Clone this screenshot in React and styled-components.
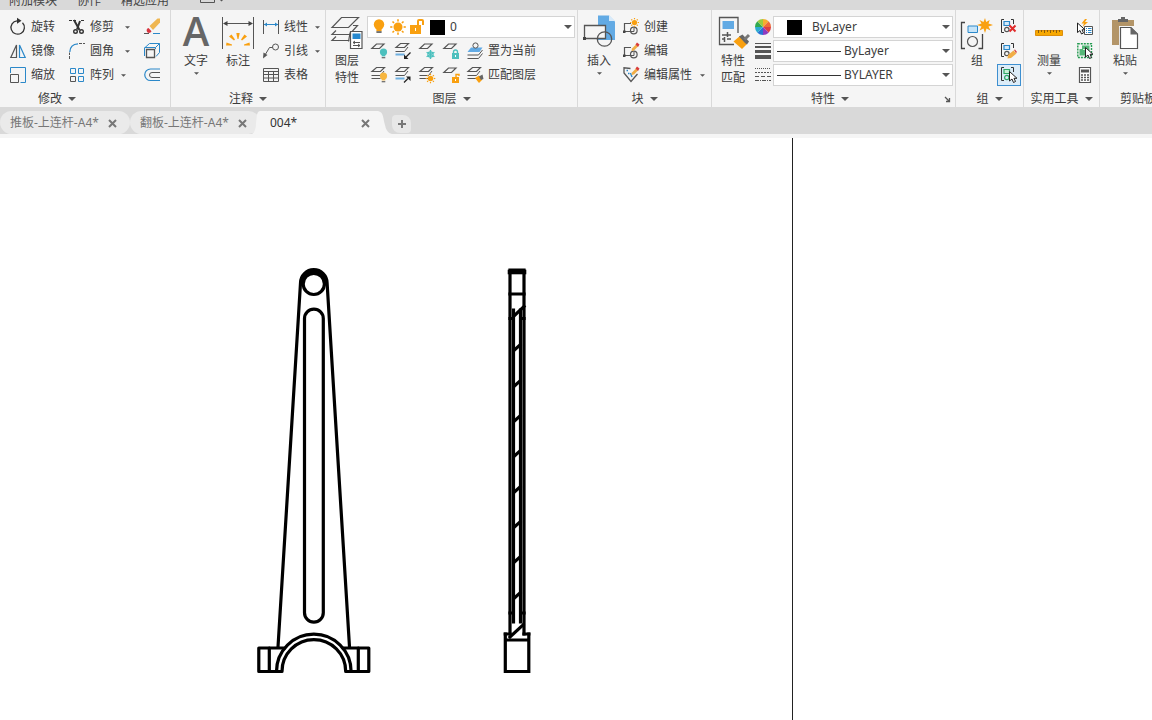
import React from 'react'
import styled, { createGlobalStyle } from 'styled-components'

const INK = '#555'
const BLUE = '#2b88c9'
const ORANGE = '#f9a010'
const TEAL = '#4cc0be'

/* ---------- small icons, 16 x 16 ---------- */

const Rotate = () => (
    <Icon viewBox="0 0 16 16" stroke="#333">
        <path d="M7 1.800A6.700 6.700 0 1 0 12.500 3.800" strokeWidth="1.300" />
        <path d="M7 -1.200L11.500 1.800L7 4.800z" fill="#333" stroke="none" />
    </Icon>
)

const Mirror = () => (
    <Icon viewBox="0 0 16 16">
        <path d="M6.500 2V14.500H.8z" strokeWidth="1.200" />
        <path d="M9.500 2V14.500H15.200z" stroke={BLUE} strokeWidth="1.200" />
    </Icon>
)

const Scale = () => (
    <Icon viewBox="0 0 16 16">
        <path d="M.5 6V.5H15.500V15.500H10.500" stroke={BLUE} />
        <path d="M.5 7.500H8.500V15.500H.5z" />
    </Icon>
)

const Trim = () => (
    <Icon viewBox="0 0 16 16" stroke="#333">
        <path d="M0 1.500H7M12 1.500H16" strokeDasharray="3 1" />
        <path d="M5 1L10.500 11M11 2L8 10.500" strokeWidth="2" />
        <circle cx="6.500" cy="12.500" r="1.800" strokeWidth="1.400" />
        <circle cx="12.500" cy="12.500" r="1.800" strokeWidth="1.400" />
    </Icon>
)

const Fillet = () => (
    <Icon viewBox="0 0 16 16">
        <path d="M.8 9C1 4 4 1 9 .8" stroke={BLUE} strokeWidth="1.300" />
        <path d="M.5 16V9.500" strokeDasharray="3 1" />
        <path d="M10 .5H16" strokeDasharray="3 1" />
    </Icon>
)

const ArrayIcon = () => (
    <Icon viewBox="0 0 16 16">
        <path d="M1.500 1.500H6.500V6.500H1.500zM9.500 1.500H14.500V6.500H9.500zM9.500 9.500H14.500V14.500H9.500z" stroke={BLUE} />
        <path d="M1.500 9.500H6.500V14.500H1.500z" />
    </Icon>
)

const Erase = () => (
    <Icon viewBox="0 0 16 16">
        <path d="M13.500 -.5H16V3.500L9 11L5.500 7z" fill="#efb650" stroke="none" />
        <path d="M4.500 9L7.500 12.200A2.500 2.500 0 1 1 4.500 9z" fill="#d8343f" stroke="none" />
        <path d="M0 14.500H5" stroke="#555" />
        <path d="M9 14.500H16" stroke={BLUE} />
    </Icon>
)

const Cube = () => (
    <Icon viewBox="0 0 16 16">
        <path d="M.5 5L5.500 .5H15.500V9.500L12 13.500M.5 5V13M.5 4.500H11.500L15.500 .5M11.500 4.500V6" stroke={BLUE} />
        <path d="M2.500 6.500H10.500V14.500H2.500z" strokeWidth="1.300" />
    </Icon>
)

const Offset = () => (
    <Icon viewBox="0 0 16 16">
        <path d="M16 2H6.500A5.700 5.700 0 0 0 6.500 13.500H16" stroke={BLUE} strokeWidth="1.200" />
        <path d="M16 5.500H8A2.500 2.500 0 0 0 8 10.500H16" />
    </Icon>
)

const Linear = () => (
    <Icon viewBox="0 0 16 16">
        <path d="M.5 1V15M15.500 1V15" />
        <path d="M1 5.500H15" stroke={BLUE} />
        <path d="M1 5.500L4 3.500V7.500zM15 5.500L12 3.500V7.500z" fill={BLUE} stroke="none" />
    </Icon>
)

const Leader = () => (
    <Icon viewBox="0 0 16 16">
        <circle cx="12.500" cy="4" r="3" />
        <path d="M9.500 4.500H6.500L2 12" />
        <path d="M0 15.500L.5 9.500L4.500 12z" fill="#555" stroke="none" />
    </Icon>
)

const TableIcon = () => (
    <Icon viewBox="0 0 16 16">
        <path d="M.5 1.500H15.500V14.500H.5zM.5 4.500H15.500M.5 7.500H15.500M.5 11H15.500M5.500 4.500V14.500M10.500 4.500V14.500" />
    </Icon>
)

const Sheet = () => <path d="M5.500 1H13L8.500 5.500H.8z" strokeWidth="1.200" />

const Stack = ({ lower = INK }) => (
    <>
        <path d="M5.500 .5H13.500L9.500 4.500H1z" strokeWidth="1.200" />
        <path d="M13 4L9.500 8.500H.5" />
        <path d="M.5 11.500H9.500" stroke={lower} strokeWidth={lower === INK ? 1 : 2} />
    </>
)

const Bulb = ({ x, y, r, color }) => (
    <>
        <circle cx={x} cy={y} r={r} fill={color} stroke="none" />
        <path d={`M${x - r / 2} ${y + r - 1}h${r}v${r / 2}h${-r}z`} fill={color} stroke="none" />
        <path d={`M${x - r / 2} ${y + r + 1.5}h${r}v${r / 3}h${-r}z`} fill="#666" stroke="none" />
    </>
)

const Rays = ({ x, y, r, color }) => (
    <>
        <circle cx={x} cy={y} r={r * 0.58} fill={color} stroke="none" />
        {[0, 45, 90, 135, 180, 225, 270, 315].map(a => (
            <path key={a} d={`M${x} ${y - r}V${y - r * 0.72}`} stroke={color} strokeWidth={r > 6 ? 1.6 : 1.2} transform={`rotate(${a} ${x} ${y})`} />
        ))}
    </>
)

const Lock = ({ color, open }) => (
    <>
        <path d="M9 10H16V16H9z" fill={color} stroke="none" />
        <path d={open ? 'M13 10V7.500H16V9' : 'M10.500 10V9A2 2 0 0 1 14.500 9V10'} stroke={color} strokeWidth="1.400" />
        <path d="M12.500 12V14" stroke="#fff" />
    </>
)

const LayerOff = () => <Icon viewBox="0 0 16 16"><Sheet /><Bulb x={12.5} y={9} r={3.6} color={TEAL} /></Icon>
const LayerIso = () => (
    <Icon viewBox="0 0 16 16">
        <Stack lower="#6dafe0" />
        <path d="M15.500 9.500L11 14" stroke="#222" strokeWidth="1.300" />
        <path d="M9 16V11.500L13.500 16z" fill="#222" stroke="none" />
    </Icon>
)
const LayerFreeze = () => (
    <Icon viewBox="0 0 16 16">
        <Sheet />
        <circle cx="11.500" cy="11.500" r="2.600" stroke={TEAL} strokeWidth="1.200" />
        {[0, 60, 120].map(a => (
            <path key={a} d="M11.500 7V16" stroke={TEAL} strokeWidth="1.400" transform={`rotate(${a} 11.500 11.500)`} />
        ))}
    </Icon>
)
const LayerLock = () => <Icon viewBox="0 0 16 16"><Sheet /><Lock color={TEAL} /></Icon>
const MakeCurrent = () => (
    <Icon viewBox="0 0 16 16">
        <path d="M4 4.500H15.500L12.500 9H.5z" fill="#62aae4" stroke="none" />
        <circle cx="8.500" cy="2.500" r="2.600" fill="#f5f5f5" />
        <path d="M15.500 7L11.500 12H.5M15.500 10.500L11.500 15.500H.5" />
    </Icon>
)
const LayersOn = () => <Icon viewBox="0 0 16 16"><Stack /><Bulb x={12.5} y={9} r={3.6} color="#f7b63f" /></Icon>
const LayerUniso = () => (
    <Icon viewBox="0 0 16 16">
        <Stack lower="#6dafe0" />
        <path d="M9 15.500L13 11.500" stroke="#222" strokeWidth="1.300" />
        <path d="M15.500 9.500V14L11 9.500z" fill="#222" stroke="none" />
    </Icon>
)
const LayerThaw = () => <Icon viewBox="0 0 16 16"><Stack /><Rays x={11.5} y={11.5} r={4.8} color={ORANGE} /></Icon>
const LayerUnlock = () => <Icon viewBox="0 0 16 16"><Sheet /><Lock color={ORANGE} open /></Icon>
const LayerMatch = () => (
    <Icon viewBox="0 0 16 16">
        <Stack />
        <path d="M8 11L12 8.500L15 13L12 16z" fill={ORANGE} stroke="none" />
        <path d="M12 9.500L15.500 7.500L16.500 12L14 13z" fill="#666" stroke="none" />
    </Icon>
)

const Pencil = () => (
    <>
        <path d="M9 5.500L13 1.500L15 3.500L11 7.500L8.500 8z" fill="#f0ad45" stroke="none" />
        <path d="M12.500 1.500L14 -.5L16.500 1.500L15 4z" fill="#d83b3b" stroke="none" />
    </>
)
const BlockShape = () => (
    <>
        <path d="M8 4.500H1.500V12.500H7" strokeWidth="1.200" />
        <circle cx="10.800" cy="11.500" r="3.300" strokeWidth="1.200" />
        <path d="M7 12.500H11V9" />
        <path d="M0 11.500H2.500V14H0z" fill="#444" stroke="none" />
    </>
)
const BlockCreate = () => <Icon viewBox="0 0 16 16"><BlockShape /><Rays x={11.5} y={3.5} r={4.5} color={ORANGE} /></Icon>
const BlockEdit = () => <Icon viewBox="0 0 16 16"><BlockShape /><Pencil /></Icon>
const AttrEdit = () => (
    <Icon viewBox="0 0 16 16">
        <path d="M7.500 1.500L1 .8V6L8 14.500L14.500 7" strokeWidth="1.300" />
        <path d="M3.500 3.500H5M5 6.500H6.500M7.500 6L9 10" stroke={BLUE} strokeWidth="1.400" />
        <Pencil />
    </Icon>
)

const Wheel = () => (
    <Icon viewBox="0 0 16 16">
        {['#f6ad2f', '#ef6a37', '#dd3e42', '#8d3bc0', '#2874d4', '#2bacd0', '#31aa50', '#9bcb3e'].map((c, i) => (
            <path key={c} d="M8 8V0A8 8 0 0 1 13.660 2.340z" fill={c} stroke="none" transform={`rotate(${i * 45} 8 8)`} />
        ))}
    </Icon>
)
const Weights = () => (
    <Icon viewBox="0 0 16 16">
        <path d="M0 .5H16" />
        <path d="M0 4H16" strokeWidth="2" />
        <path d="M0 8.500H16" strokeWidth="3" />
        <path d="M0 14H16" strokeWidth="4" />
    </Icon>
)
const Dashes = () => (
    <Icon viewBox="0 0 16 16">
        <path d="M0 1.500H16" strokeDasharray="1 1" />
        <path d="M0 5.500H16" strokeDasharray="2 1" />
        <path d="M0 9.500H16" strokeDasharray="4 2" />
        <path d="M0 13.500H16" strokeDasharray="4 1 1 1" />
    </Icon>
)

const Grouped = ({ color = BLUE, fill = '#d4eafa' }) => (
    <>
        <path d="M3 .5H.5V13.500H3M10 .5H12.500V5" stroke="#333" />
        <path d="M3 2.500H8.500V6.500H3z" fill={fill} stroke={color} strokeWidth="1.200" />
        <circle cx="5.800" cy="10.500" r="2.200" stroke={color === BLUE ? INK : color} strokeWidth="1.200" />
    </>
)
const Arrow = ({ x = 0, y = 0 }) => (
    <path d="M0 0V9.500L2.500 7.500L4 11L6 10L4.500 6.800H7.500z" fill="#fff" stroke="#222" transform={`translate(${x} ${y})`} />
)
const Ungroup = () => (
    <Icon viewBox="0 0 16 16">
        <Grouped />
        <path d="M8.500 6.500L14.500 12.500M14.500 6.500L8.500 12.500" stroke="#e02c2c" strokeWidth="2" />
    </Icon>
)
const GroupEdit = () => (
    <Icon viewBox="0 0 16 16">
        <Grouped />
        <path d="M7 12L12.500 7.500L15.500 10.500L10 15L6.500 15.500z" fill="#f0ad45" stroke="none" />
        <path d="M13 7L14 6.500L16 9L15 10z" fill="#d83b3b" stroke="none" />
    </Icon>
)
const GroupPick = () => <Icon viewBox="0 0 16 16"><Grouped color="#2fa866" fill="#c9efd8" /><Arrow x={8.500} y={4.500} /></Icon>

const QuickSelect = () => (
    <Icon viewBox="0 0 16 16">
        <path d="M7.500 7.500H15.500V15.500H7.500z" fill="#fff" />
        <path d="M9 9.500H10M9 11.500H10M9 13.500H10M11 9.500H14.500M11 11.500H14.500M11 13.500H14.500" stroke={BLUE} />
        <path d="M8 0L4.500 4.500H7L5.500 8L11 3H8L10 0z" fill={ORANGE} stroke="none" />
        <Arrow x={.5} y={4} />
    </Icon>
)
const SelectAll = () => (
    <Icon viewBox="0 0 16 16">
        <path d="M.8 .8H14.500V14.500H.8z" stroke="#259b51" strokeWidth="1.400" strokeDasharray="2 1" />
        <path d="M5 2.500H12.500V10H9V12.500H2.500V6H5z" fill="#55b878" stroke="none" />
        <path d="M6 6.500H9" stroke="#d8f3e0" />
        <Arrow x={8.500} y={4.500} />
    </Icon>
)
const Calc = () => (
    <Icon viewBox="0 0 16 16">
        <path d="M2.500 .5H13.500V15.500H2.500z" fill="#fff" strokeWidth="1.200" />
        <path d="M4 4H12" strokeWidth="3" />
        <path d="M4 8H12M4 10.500H12M4 13H12" strokeWidth="1.600" strokeDasharray="2 1" />
    </Icon>
)

/* ---------- big icons, 32 x 32 ---------- */

const DimIcon = () => (
    <BigIcon viewBox="0 0 32 32">
        <path d="M.5 0V32M31.500 0V32M2 6.500H30" />
        <path d="M1 6.500L5.500 4V9zM31 6.500L26.500 4V9z" fill="#444" stroke="none" />
        <g fill={ORANGE} stroke="none">
            <path d="M14.300 16H17.700L16.500 22H15.500z" />
            <path d="M7 19.500L9.500 17.500L13 22.500L12 23.500z" />
            <path d="M25 19.500L22.500 17.500L19 22.500L20 23.500z" />
            <path d="M4.500 25.500L10 27.500V28.500H4z" />
            <path d="M27.500 25.500L22 27.500V28.500H28z" />
        </g>
    </BigIcon>
)
const LayerProps = () => (
    <BigIcon viewBox="0 0 32 32">
        <path d="M10.500 .5H27.500L17.500 10.500H1z" strokeWidth="1.200" />
        <path d="M22 8.500H26.500L22 13.500L19 17.500H1L5 13.500M22 16H19L17.500 24.500M5 19.500L1 23.500H18.500" strokeWidth="1.200" />
        <path d="M19.500 14.500H31V31.500H19.500z" fill="#fff" strokeWidth="1.200" />
        <path d="M21.500 16.500H29.500V22H21.500z" fill="#2789cf" stroke="none" />
        <path d="M22 25.500H29M22 28.500H29M24 24L22 25.500L24 27M27 27L29 28.500L27 30" />
    </BigIcon>
)
const InsertIcon = () => (
    <BigIcon viewBox="0 0 32 32">
        <path d="M15 -1.500H26L32 4.500V23H15z" fill="#62aae4" stroke="none" />
        <path d="M26 -2L32 4H26z" fill="#d7eafa" stroke="none" />
        <path d="M1.500 8.500H22.500V21.500H1.500z" fill="#f5f5f5" strokeWidth="1.300" />
        <circle cx="21.500" cy="22" r="7.200" strokeWidth="1.300" />
        <path d="M0 20H3V23H0z" fill="#444" stroke="none" />
    </BigIcon>
)
const MatchProps = () => (
    <BigIcon viewBox="0 0 32 32">
        <path d="M21 16V.5H2.500V27.500H17" strokeWidth="1.300" />
        <path d="M5.500 4H17V12H5.500z" fill="#62aae4" stroke="none" />
        <path d="M5 18H14M5 22H8M10 22H14M10.500 15V20M7.500 20V25" strokeWidth="1.500" />
        <path d="M16.500 24.500L23 19L30 27L25 32z" fill={ORANGE} stroke="none" />
        <path d="M22 19.500L25.500 17.500L32 24.500L30 27.500L28 26z" fill="#666" stroke="none" />
        <path d="M27.500 22.500L32 18" stroke="#777" strokeWidth="3" />
    </BigIcon>
)
const GroupIcon = () => (
    <BigIcon viewBox="0 0 32 32">
        <path d="M4 5.500H.5V31.500H4M17.500 31.500H21.500V17" stroke="#444" strokeWidth="1.300" />
        <path d="M7 9H16.500V15.500H7z" fill="#c6e4f8" stroke={BLUE} />
        <circle cx="11.500" cy="24.500" r="5" strokeWidth="1.200" />
        <path d="M24 1L25.200 5L28.700 3L27.500 6.500L32 8L27.500 9.500L29.500 13.500L25.500 11.500L24 16L22.500 11.500L18.500 13.500L20.500 9.500L16 8L20.500 6.500L18.500 3L22.500 5z" fill={ORANGE} stroke="none" />
    </BigIcon>
)
const Ruler = () => (
    <BigIcon viewBox="0 0 32 32">
        <path d="M2.500 13.500H29.500V18.500H2.500z" fill="#f7a800" stroke="#dc8e0c" />
        <path d="M5.500 13V16M8.500 13V15M11.500 13V16M14.500 13V15M17.500 13V16M20.500 13V15M23.500 13V16M26.500 13V15" stroke="#8b5c0b" />
    </BigIcon>
)
const PasteIcon = () => (
    <BigIcon viewBox="0 0 32 32">
        <path d="M3 3H25V9H10V28H3z" fill="#b39568" stroke="none" />
        <path d="M9 2H12V0H16V2H19V5H9z" fill="#666" stroke="none" />
        <path d="M11.500 10.500H22L28.500 17V31.500H11.500z" fill="#fff" strokeWidth="1.200" />
        <path d="M21.500 10V17.500H29z" fill="#666" stroke="none" />
    </BigIcon>
)

const Caret = ({ big }) => (
    <CaretIcon viewBox="0 0 8 4" $big={big} aria-hidden="true">
        <path d="M0 0H8L4 4z" />
    </CaretIcon>
)

/* ---------- building blocks ---------- */

const Tool = ({ icon, label, name, arrow, on }) => (
    <ToolButton type="button" aria-label={label ? undefined : name} $on={on}>
        {icon}
        {label && <span>{label}</span>}
        {arrow && <ArrowBox $gap={arrow}><Caret /></ArrowBox>}
    </ToolButton>
)

const BigTool = ({ icon, lines, arrow }) => (
    <BigButton type="button">
        <Art>{icon}</Art>
        {lines.map(l => <Label key={l}>{l}</Label>)}
        {arrow && <Caret />}
    </BigButton>
)

const Panel = ({ title, children, launcher, left, gap, pad, grow }) => (
    <PanelBox $grow={grow}>
        <PanelBody $gap={gap} $pad={pad}>{children}</PanelBody>
        <PanelFooter $left={left}>
            <PanelTitle type="button">{title}<Caret big /></PanelTitle>
            {launcher && (
                <Launcher type="button" aria-label="特性面板">
                    <svg viewBox="0 0 7 7" width="7" height="7"><path d="M1 1L5 5M5.500 2V5.500H2" stroke="#555" strokeWidth="1.300" fill="none" /></svg>
                </Launcher>
            )}
        </PanelFooter>
    </PanelBox>
)

const Combo = ({ name, value, children, indent }) => (
    <ComboBox $indent={indent}>
        {children}
        <select aria-label={name} defaultValue={value}><option>{value}</option></select>
        <Caret big />
    </ComboBox>
)

const Close = () => (
    <svg viewBox="0 0 9 9" width="9" height="9"><path d="M1 1L8 8M8 1L1 8" stroke="#777" strokeWidth="2" /></svg>
)

const hatches = [347, 383, 418, 453, 489, 524, 559, 595]

const Drawing = () => (
    <Sketch viewBox="0 138 1152 582" role="img" aria-label="上连杆">
        <path d="M792.500 138V720" stroke="#222" strokeWidth="1" />
        <g stroke="#000" strokeWidth="3.200" strokeLinecap="round" strokeLinejoin="round">
            <path d="M278 647L300.500 283A13.300 13.300 0 0 1 327.100 283L349.500 647" />
            <path d="M301.800 284A12 12 0 0 1 325.800 284" />
            <circle cx="313.800" cy="283.900" r="10.600" />
            <path d="M304.500 318.500A9.400 9.400 0 0 1 323.300 318.500V612.800A9.400 9.400 0 0 1 304.500 612.800z" />
            <path d="M284.500 648H258.800V671.500H282A31.800 31.800 0 0 1 345.700 671.500H368.800V648H343" />
            <path d="M276.500 671.500A37.300 37.300 0 0 1 351.100 671.500M269.300 648V671.500M358.300 648V671.500" />
        </g>
        <g stroke="#000" strokeWidth="3.200" strokeLinecap="square">
            <path d="M510 634V270H524V634" />
            <path d="M510 272H524" strokeWidth="4.600" />
            <path d="M510 294H524M514 316L524 306.500" />
            <path d="M513.500 310V622M520.500 310V622" />
            <path d="M510 318.500H513M521 318.500H524M510 613H513M521 613H524" />
            <path d="M510 637L523 625" />
            <path d="M505.300 634H510M524 634H528.800" />
            <path d="M505.300 634V671.500H528.800V634M505.300 640H528.800" />
            {hatches.map(y => <path key={y} d={`M515 ${y + 2.500}L520 ${y - 2}`} />)}
        </g>
    </Sketch>
)

export default function App() {
    return (
        <Page>
            <GlobalStyle />
            <MenuBar>
                <a href="#addons">附加模块</a>
                <a href="#collab">协作</a>
                <a href="#apps">精选应用</a>
                <MenuToggle type="button" aria-label="功能区">
                    <svg viewBox="0 0 24 12" width="24" height="12"><path d="M.5 0V10.500H14.500V0M5 5.500H10" fill="none" stroke="#555" /><path d="M19 7H24L21.500 9.500z" fill="#555" /></svg>
                </MenuToggle>
            </MenuBar>

            <Ribbon>
                <Panel title="修改" left gap={14} pad="0 10px">
                    <Column>
                        <Tool icon={<Rotate />} label="旋转" />
                        <Tool icon={<Mirror />} label="镜像" />
                        <Tool icon={<Scale />} label="缩放" />
                    </Column>
                    <Column>
                        <Tool icon={<Trim />} label="修剪" arrow={11} />
                        <Tool icon={<Fillet />} label="圆角" arrow={11} />
                        <Tool icon={<ArrayIcon />} label="阵列" arrow={7} />
                    </Column>
                    <Column>
                        <Tool icon={<Erase />} name="删除" />
                        <Tool icon={<Cube />} name="分解" />
                        <Tool icon={<Offset />} name="偏移" />
                    </Column>
                </Panel>

                <Panel title="注释" gap={8} pad="0 5px 0 8px">
                    <BigTool icon={<Letter>A</Letter>} lines={['文字']} arrow />
                    <BigTool icon={<DimIcon />} lines={['标注']} />
                    <Column>
                        <Tool icon={<Linear />} label="线性" arrow={7} />
                        <Tool icon={<Leader />} label="引线" arrow={7} />
                        <Tool icon={<TableIcon />} label="表格" />
                    </Column>
                </Panel>

                <Panel title="图层" gap={3} pad="0 2px 0 4px">
                    <BigTool icon={<LayerProps />} lines={['图层', '特性']} />
                    <LayerTools>
                        <Combo name="图层" value="0" indent={3}>
                            <Icon viewBox="0 0 16 16"><Bulb x={8} y={5.5} r={5.2} color={ORANGE} /></Icon>
                            <Icon viewBox="0 0 16 16"><Rays x={8} y={8} r={7.8} color={ORANGE} /></Icon>
                            <Icon viewBox="0 0 16 16">
                                <path d="M1 6H12V15H1z" fill={ORANGE} stroke="none" />
                                <path d="M9 6V2A1 1 0 0 1 10 1H13A1 1 0 0 1 14 2V6" stroke={ORANGE} strokeWidth="2" />
                                <path d="M6.500 9V12" stroke="#fff" />
                            </Icon>
                            <Swatch />
                        </Combo>
                        <IconRow>
                            <Tool icon={<LayerOff />} name="关闭图层" />
                            <Tool icon={<LayerIso />} name="隔离" />
                            <Tool icon={<LayerFreeze />} name="冻结" />
                            <Tool icon={<LayerLock />} name="锁定" />
                            <Tool icon={<MakeCurrent />} label="置为当前" />
                        </IconRow>
                        <IconRow>
                            <Tool icon={<LayersOn />} name="打开所有图层" />
                            <Tool icon={<LayerUniso />} name="取消隔离" />
                            <Tool icon={<LayerThaw />} name="解冻" />
                            <Tool icon={<LayerUnlock />} name="解锁" />
                            <Tool icon={<LayerMatch />} label="匹配图层" />
                        </IconRow>
                    </LayerTools>
                </Panel>

                <Panel title="块" gap={7} pad="0 6px 0 4px">
                    <BigTool icon={<InsertIcon />} lines={['插入']} arrow />
                    <Column>
                        <Tool icon={<BlockCreate />} label="创建" />
                        <Tool icon={<BlockEdit />} label="编辑" />
                        <Tool icon={<AttrEdit />} label="编辑属性" arrow={8} />
                    </Column>
                </Panel>

                <Panel title="特性" launcher gap={5} pad="0 2px 0 4px">
                    <BigTool icon={<MatchProps />} lines={['特性', '匹配']} />
                    <PropGrid>
                        <Wheel />
                        <Combo name="颜色" value="ByLayer" indent={11}><Swatch /><Spacer /></Combo>
                        <Weights />
                        <Combo name="线宽" value="ByLayer" indent={3}><Rule /></Combo>
                        <Dashes />
                        <Combo name="线型" value="BYLAYER" indent={3}><Rule /></Combo>
                    </PropGrid>
                </Panel>

                <Panel title="组" gap={3} pad="0 2px 0 4px">
                    <BigTool icon={<GroupIcon />} lines={['组']} />
                    <Column>
                        <Tool icon={<Ungroup />} name="解除编组" on="off" />
                        <Tool icon={<GroupEdit />} name="组编辑" on="off" />
                        <Tool icon={<GroupPick />} name="组选择" on="on" />
                    </Column>
                </Panel>

                <Panel title="实用工具" gap={11} pad="0 6px 0 8px">
                    <BigTool icon={<Ruler />} lines={['测量']} arrow />
                    <Column>
                        <Tool icon={<QuickSelect />} name="快速选择" />
                        <Tool icon={<SelectAll />} name="全部选择" />
                        <Tool icon={<Calc />} name="计算器" />
                    </Column>
                </Panel>

                <Panel title="剪贴板" pad="0 48px 0 8px" grow>
                    <BigTool icon={<PasteIcon />} lines={['粘贴']} arrow />
                </Panel>
            </Ribbon>

            <TabBar>
                {['推板-上连杆-A4*', '翻板-上连杆-A4*'].map(t => (
                    <Tab key={t}>
                        <button type="button">{t}</button>
                        <button type="button" aria-label="关闭"><Close /></button>
                    </Tab>
                ))}
                <TabEdge viewBox="0 0 8 23" width="8" height="23" aria-hidden="true"><path d="M8 0C4 1 5 7 4 12C4 17 3 21 0 23H8z" /></TabEdge>
                <Tab $active>
                    <button type="button">004*</button>
                    <button type="button" aria-label="关闭"><Close /></button>
                </Tab>
                <TabEdge $after viewBox="0 0 14 23" width="14" height="23" aria-hidden="true"><path d="M0 0C6 1 5 8 7 14C8 19 10 22 14 23H0z" /></TabEdge>
                <AddTab type="button" aria-label="新建">
                    <svg viewBox="0 0 8 8" width="8" height="8"><path d="M4 0V8M0 4H8" stroke="#777" strokeWidth="2" /></svg>
                </AddTab>
            </TabBar>

            <Canvas>
                <Drawing />
            </Canvas>
        </Page>
    )
}

const GlobalStyle = createGlobalStyle`
    * {
        box-sizing: border-box;
    }
    body {
        margin: 0;
        background: #fff;
    }
    body, button, select {
        font-family: "Noto Sans", "Noto Sans CJK SC", sans-serif;
        font-size: 12px;
        line-height: 16px;
        color: #3c3c3c;
    }
    button {
        margin: 0;
        padding: 0;
        border: none;
        background: none;
        white-space: nowrap;
    }
    svg {
        display: block;
        flex: none;
    }
`

const Page = styled.div`
    display: flex;
    flex-direction: column;
    min-height: 100vh;
`

const MenuBar = styled.nav`
    display: flex;
    align-items: flex-end;
    gap: 20px;
    height: 10px;
    padding: 0 9px;
    overflow: hidden;
    background: #d9d9d9;
    a {
        color: #444;
        text-decoration: none;
        white-space: nowrap;
        padding-bottom: 1px;
    }
`

const MenuToggle = styled.button`
    margin-left: 11px;
    padding-bottom: 6px;
`

const Ribbon = styled.header`
    display: flex;
    overflow: hidden;
    background: #f5f5f5;
`

const PanelBox = styled.section`
    display: flex;
    flex-direction: column;
    flex: ${p => p.$grow ? '1 0 auto' : 'none'};
    border-right: 1px solid #d9d9d9;
`

const PanelBody = styled.div`
    display: flex;
    align-items: flex-start;
    gap: ${p => p.$gap}px;
    height: 77px;
    padding: ${p => p.$pad};
    padding-top: 5px;
`

const PanelFooter = styled.div`
    display: flex;
    align-items: center;
    justify-content: ${p => p.$left ? 'flex-start' : 'center'};
    height: 20px;
    padding: 4px 4px 0 ${p => p.$left ? 38 : 4}px;
`

const PanelTitle = styled.button`
    display: flex;
    align-items: center;
    gap: 6px;
    &:not(:last-child) {
        margin: 0 auto;
    }
`

const Launcher = styled.button`
    padding: 2px 0;
`

const Column = styled.div`
    display: flex;
    flex-direction: column;
    align-items: flex-start;
`

const ToolButton = styled.button`
    display: flex;
    align-items: center;
    gap: 5px;
    height: ${p => p.$on ? 22 : 24}px;
    ${p => p.$on && `
        width: 24px;
        justify-content: center;
        margin: 1px 0;
        border: 1px solid ${p.$on === 'on' ? '#3d8fd0' : 'transparent'};
        background: ${p.$on === 'on' ? '#dcecf8' : 'none'};
    `}
`

const ArrowBox = styled.span`
    padding-left: ${p => p.$gap - 5}px;
`

const BigButton = styled.button`
    display: flex;
    flex-direction: column;
    align-items: center;
    min-width: 34px;
`

const Art = styled.span`
    display: flex;
    align-items: center;
    justify-content: center;
    width: 34px;
    height: 36px;
    margin-bottom: 1px;
`

const Label = styled.span`
    line-height: 17px;
    & + svg {
        margin-top: 3px;
    }
`

const Letter = styled.b`
    padding-bottom: 4px;
    font: 600 40px/32px "Open Sans", sans-serif;
    color: #666;
`

const Icon = styled.svg`
    width: 16px;
    height: 16px;
    fill: none;
    stroke: ${p => p.stroke || INK};
    overflow: visible;
`

const BigIcon = styled(Icon)`
    width: 32px;
    height: 32px;
`

const CaretIcon = styled.svg`
    width: ${p => p.$big ? 8 : 5}px;
    height: ${p => p.$big ? 4 : 3}px;
    fill: #555;
`

const LayerTools = styled.div`
    display: flex;
    flex-direction: column;
    width: 208px;
`

const IconRow = styled.div`
    display: flex;
    gap: 8px;
    padding-left: 4px;
`

const ComboBox = styled.div`
    display: flex;
    align-items: center;
    gap: 3px;
    height: 22px;
    margin: 1px 0;
    padding: 0 2px 0 ${p => p.$indent}px;
    border: 1px solid #d4d4d4;
    background: #fff;
    select {
        flex: 1;
        min-width: 0;
        padding: 0;
        border: none;
        appearance: none;
        background: none;
    }
`

const Swatch = styled.span`
    width: 15px;
    height: 15px;
    margin: 0 2px;
    background: #000;
`

const Spacer = styled.span`
    width: 2px;
`

const Rule = styled.span`
    width: 64px;
    height: 1px;
    background: #333;
`

const PropGrid = styled.div`
    display: grid;
    grid-template-columns: 16px 180px;
    column-gap: 2px;
    align-items: center;
`

const TabBar = styled.div`
    display: flex;
    align-items: flex-end;
    height: 31px;
    padding-bottom: 4px;
    background: linear-gradient(#d9d9d9 27px, #f5f5f5 27px);
`

const Tab = styled.div`
    display: flex;
    align-items: center;
    justify-content: space-between;
    min-width: ${p => p.$active ? 118 : 130}px;
    height: 23px;
    padding: 1px ${p => p.$active ? 8 : 13}px 0 10px;
    border-radius: ${p => p.$active ? 0 : 12}px;
    background: ${p => p.$active ? '#f5f5f5' : '#eaeaea'};
    button {
        color: ${p => p.$active ? '#333' : '#777'};
    }
`

const TabEdge = styled.svg`
    margin-left: ${p => p.$after ? 0 : -8}px;
    fill: #f5f5f5;
`

const AddTab = styled.button`
    display: flex;
    align-items: center;
    justify-content: center;
    width: 19px;
    height: 18px;
    margin-bottom: 1px;
    border-radius: 4px 8px 4px 8px;
    background: #e8e8e8;
`

const Canvas = styled.main`
    flex: 1;
    background: #fff;
`

const Sketch = styled.svg`
    width: 100%;
    fill: none;
`
